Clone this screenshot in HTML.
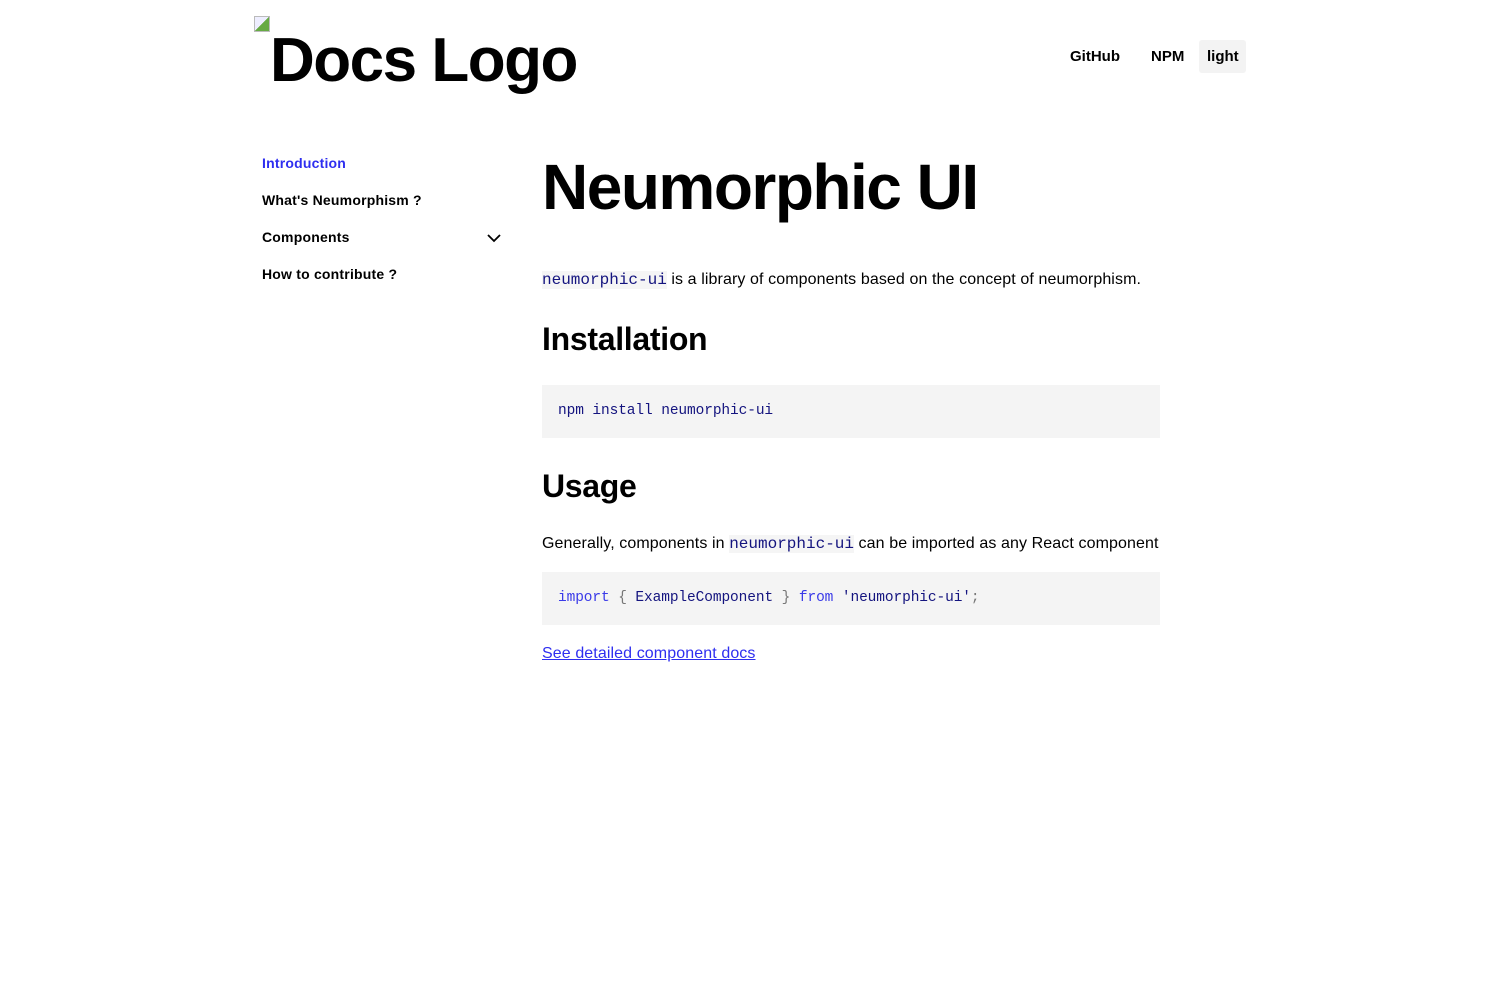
<!DOCTYPE html>
<html><head><meta charset="utf-8"><style>
body{margin:0;background:#fff;font-family:"Liberation Sans",sans-serif;color:#000;}
.logo{position:absolute;left:254px;top:16px;}
.logo .img{position:absolute;left:0;top:0;width:16px;height:16px;border:1px solid #bbb;background:linear-gradient(135deg,#eef 50%,#6a4 50%);box-sizing:border-box}
.logo span{position:absolute;left:16px;top:9px;font-size:62px;font-weight:bold;white-space:nowrap;letter-spacing:-1.5px}
.nav{position:absolute;top:40px;left:0;font-size:15px;font-weight:bold}
.nav div{position:absolute;top:0;padding:8px 8px;height:17px;line-height:18px;white-space:nowrap}
.nav .l{background:#f3f3f3;border-radius:3px}
.side{position:absolute;left:262px;top:155px;width:240px;font-size:14px;font-weight:bold;letter-spacing:0.2px}
.side div{height:37px;position:relative}
.side .a{color:#2e2ef0}
.main{position:absolute;left:542px;top:150px;width:618px}
h1{font-size:64px;margin:0;line-height:74px;letter-spacing:-1.5px}
p{font-size:16px;margin:0;letter-spacing:0.1px}
code{font-family:"Liberation Mono",monospace;color:#14147f;background:#f5f5f5;font-size:16px;letter-spacing:0}
pre{background:#f4f4f4;margin:0;padding:0 16px;height:53px;line-height:53px;font-family:"Liberation Mono",monospace;font-size:14.5px;color:#14147f;letter-spacing:-0.1px}
h2{font-size:32px;margin:0;line-height:40px;letter-spacing:-0.3px}
a{color:#2e2ef0;font-size:16px;letter-spacing:0.1px}
.k{color:#3a3ae8}.g{color:#777}
</style></head><body>
<div class="logo"><div class="img"></div><span>Docs Logo</span></div>
<div class="nav"><div style="left:1062px">GitHub</div><div style="left:1143px">NPM</div><div class="l" style="left:1199px;width:31px">light</div></div>
<div class="side">
<div class="a">Introduction</div>
<div>What's Neumorphism ?</div>
<div>Components<svg style="position:absolute;right:0;top:1px" width="16" height="16" viewBox="0 0 16 16"><path d="M2 5l6 6 6-6" fill="none" stroke="#000" stroke-width="1.8"/></svg></div>
<div>How to contribute ?</div>
</div>
<div class="main">
<h1>Neumorphic UI</h1>
<p style="position:absolute;top:121px;white-space:nowrap"><code>neumorphic-ui</code> is a library of components based on the concept of neumorphism.</p>
<h2 style="position:absolute;top:169px">Installation</h2>
<pre style="position:absolute;top:235px;width:586px">npm install neumorphic-ui</pre>
<h2 style="position:absolute;top:316px">Usage</h2>
<p style="position:absolute;top:385px;white-space:nowrap">Generally, components in <code>neumorphic-ui</code> can be imported as any React component</p>
<pre style="position:absolute;top:422px;width:586px"><span class="k">import</span> <span class="g">{</span> ExampleComponent <span class="g">}</span> <span class="k">from</span> 'neumorphic-ui'<span class="g">;</span></pre>
<a style="position:absolute;top:495px;white-space:nowrap" href="#">See detailed component docs</a>
</div>
</body></html>
